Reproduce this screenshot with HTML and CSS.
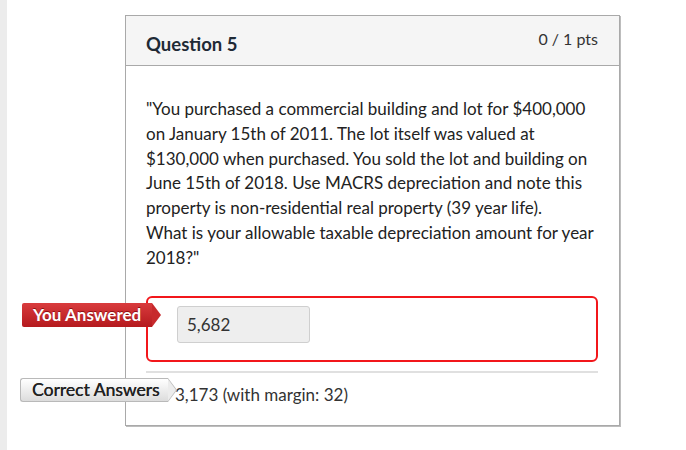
FILE: index.html
```html
<!DOCTYPE html>
<html>
<head>
<meta charset="utf-8">
<link rel="stylesheet" href="styles.css">
</head>
<body>
<div class="page">
  <div class="strip"></div>
  <div class="main">
    <div class="card">
      <div class="card-header">
        <div class="q-title">Question 5</div>
        <div class="q-pts">0 / 1 pts</div>
      </div>
      <div class="card-body">
        <p class="q-text">"You purchased a commercial building and lot for $400,000 on January 15th of 2011. The lot itself was valued at $130,000 when purchased. You sold the lot and building on June 15th of 2018. Use MACRS depreciation and note this property is non-residential real property (39 year life).<br>What is your allowable taxable depreciation amount for year 2018?"</p>
        <div class="answer-row">
          <span class="label label-red">You Answered</span>
          <div class="answer-box">
            <div class="answer-input">5,682</div>
          </div>
        </div>
        <div class="sep"></div>
        <div class="correct-row">
          <span class="label label-gray">Correct Answers</span>
          <span class="correct-text">3,173 (with margin: 32)</span>
        </div>
      </div>
    </div>
  </div>
</div>
</body>
</html>
```

FILE: styles.css
```css
html, body {
  margin: 0;
  padding: 0;
  background: #fff;
}
body {
  font-family: Lato, "Open Sans", "Liberation Sans", sans-serif;
  color: #2d2d2d;
  width: 686px;
  height: 450px;
  overflow: hidden;
}
.page {
  display: flex;
  height: 450px;
}
.strip {
  width: 7px;
  background: #ececec;
  flex: none;
}
.main {
  flex: 1;
  padding-top: 15px;
  padding-left: 118px;
}
.card {
  width: 493px;
  border: 1px solid #a9a9a9;
  box-shadow: 1px 1px 0 #bdbdbd;
  background: #fff;
}
.card-header {
  height: 49px;
  background: #f5f5f5;
  border-bottom: 1px solid #a9a9a9;
  display: flex;
  justify-content: space-between;
  padding: 0 21px 0 20px;
}
.q-title {
  font-size: 18.5px;
  font-weight: bold;
  color: #1f2a36;
  padding-top: 17px;
}
.q-pts {
  font-size: 16px;
  color: #333;
  padding-top: 13px;
}
.card-body {
  padding: 31px 21px 0 20px;
}
.q-text {
  margin: 0;
  font-size: 17px;
  line-height: 24.8px;
  color: #222;
  width: 452px;
}
.answer-row {
  position: relative;
  margin-top: 25px;
}
.answer-box {
  border: 2px solid #f2171b;
  border-radius: 6px;
  height: 66px;
  padding: 8px 0 0 29px;
  box-sizing: border-box;
}
.answer-input {
  width: 133px;
  height: 37px;
  box-sizing: border-box;
  background: #eeeeee;
  border: 1px solid #cfcfcf;
  border-radius: 3px;
  font-size: 17px;
  line-height: 35px;
  padding-left: 9px;
  color: #333;
}
.sep {
  height: 2px;
  background: #e0e0e0;
  margin-top: 9px;
}
.correct-row {
  position: relative;
  height: 52px;
  box-sizing: border-box;
  padding-top: 10px;
}
.correct-text {
  display: block;
  font-size: 17px;
  line-height: 24px;
  color: #333;
  padding-left: 29px;
}
.label {
  position: absolute;
  height: 24px;
  line-height: 24px;
  box-sizing: border-box;
  white-space: nowrap;
}
.label-red {
  left: -124px;
  top: 7px;
  width: 130px;
  padding-left: 11px;
  color: #fff;
  font-size: 17px;
  font-weight: bold;
  background: linear-gradient(#d93b3d, #b51a1e);
  border-radius: 2px 0 0 2px;
  text-shadow: 0 -1px 0 #8c1014;
}
.label-red::after {
  content: "";
  position: absolute;
  right: -9px;
  top: 0;
  border-left: 9px solid #c72a2d;
  border-top: 12px solid transparent;
  border-bottom: 12px solid transparent;
}
.label-gray {
  left: -126px;
  top: 5px;
  width: 148px;
  padding-left: 11px;
  color: #222;
  font-size: 17.5px;
  background: linear-gradient(#ffffff, #dcdcdc);
  border: 1px solid #b9b9b9;
  border-right: none;
  border-radius: 3px 0 0 3px;
  line-height: 22px;
  text-shadow: 0.3px 0 0 #222;
}
.label-gray::before {
  content: "";
  position: absolute;
  right: -9px;
  top: -1px;
  border-left: 9px solid #b9b9b9;
  border-top: 12px solid transparent;
  border-bottom: 12px solid transparent;
}
.label-gray::after {
  content: "";
  position: absolute;
  right: -8px;
  top: 0;
  border-left: 8px solid #ececec;
  border-top: 11px solid transparent;
  border-bottom: 11px solid transparent;
}
```
